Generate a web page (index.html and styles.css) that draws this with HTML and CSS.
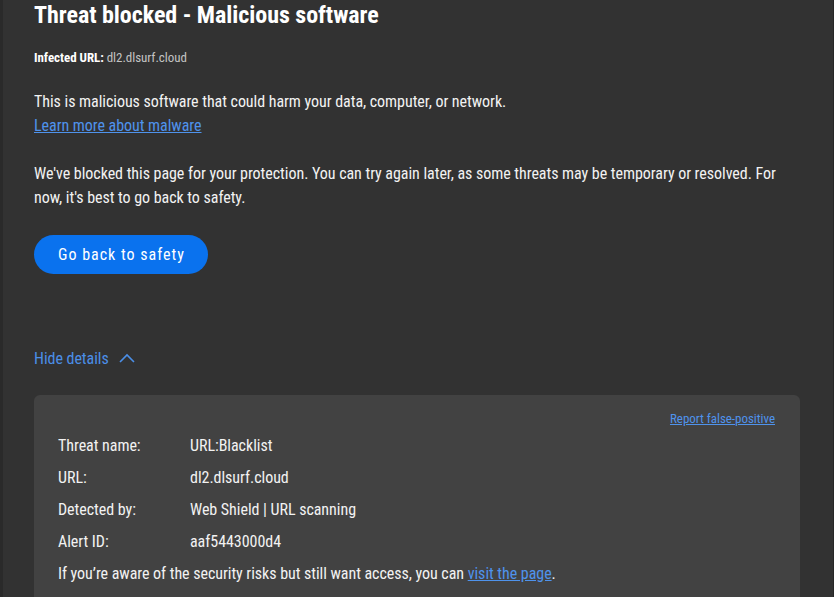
FILE: index.html
```html
<!DOCTYPE html>
<html>
<head>
<title>Threat blocked</title>
<link rel="stylesheet" href="styles.css">
</head>
<body>

<div id="page">
  <h1 class="title">Threat blocked - Malicious software</h1>

  <p class="infected"><b>Infected URL:</b> <span>dl2.dlsurf.cloud</span></p>

  <p class="text">This is malicious software that could harm your data, computer, or network.<br>
  <a href="#">Learn more about malware</a></p>

  <p class="text">We've blocked this page for your protection. You can try again later, as some threats may be temporary or resolved. For now, it's best to go back to safety.</p>

  <button class="safety">Go back to safety</button>

  <div class="toggle">
    <a>Hide details</a>
    <svg width="16" height="10" viewBox="0 0 16 10"><path d="M1 9 L8 2 L15 9" fill="none" stroke="#4b8fe8" stroke-width="1.6"/></svg>
  </div>

  <div class="details">
    <div class="report"><a href="#">Report false-positive</a></div>
    <div class="row"><span class="label">Threat name:</span><span>URL:Blacklist</span></div>
    <div class="row"><span class="label">URL:</span><span>dl2.dlsurf.cloud</span></div>
    <div class="row"><span class="label">Detected by:</span><span>Web Shield | URL scanning</span></div>
    <div class="row"><span class="label">Alert ID:</span><span>aaf5443000d4</span></div>
    <div class="row">If you’re aware of the security risks but still want access, you can&nbsp;<a href="#">visit the page</a>.</div>
  </div>
</div>

</body>
</html>
```
FILE: styles.css
```css
body {
  margin: 0;
  background-color: #323232;
  border-left: 3px solid #2a2a2a;
  border-right: 1px solid #262626;
  height: 597px;
  box-sizing: border-box;
  overflow: hidden;
  color: #f2f2f2;
  font-family: "Roboto Condensed", Roboto, sans-serif;
  font-size: 16px;
  letter-spacing: -0.04px;
}

#page {
  padding: 1px 33px 0 31px;
}

a {
  color: #4f93ec;
  text-decoration: underline;
  cursor: pointer;
}

.title {
  margin: 0;
  font-size: 24px;
  line-height: 28px;
  font-weight: 700;
  color: #ffffff;
}

.infected {
  margin: 21px 0 0 0;
  font-size: 13px;
  line-height: 16px;
}

.infected b {
  color: #ffffff;
}

.infected span {
  color: #c4c4c4;
}

.text {
  margin: 24px 0 0 0;
  line-height: 24px;
}

.safety {
  display: block;
  margin-top: 25px;
  height: 39px;
  padding: 0 23px 0 24px;
  border: none;
  border-radius: 20px;
  background-color: #0a72ee;
  color: #ffffff;
  font-family: "Roboto Condensed", Roboto, sans-serif;
  font-size: 16px;
  letter-spacing: 1px;
}

.toggle {
  display: flex;
  align-items: center;
  gap: 10px;
  margin-top: 72px;
  height: 24px;
}

.toggle a {
  color: #4b8fe8;
  text-decoration: none;
}

.details {
  margin-top: 25px;
  background-color: #424242;
  border-radius: 6px 6px 0 0;
  padding: 16px 25px 8px 24px;
}

.report {
  text-align: right;
  font-size: 13px;
  line-height: 16px;
  margin-bottom: 2px;
}

.row {
  display: flex;
  height: 32px;
  align-items: center;
}

.label {
  width: 132px;
  flex-shrink: 0;
}
```
